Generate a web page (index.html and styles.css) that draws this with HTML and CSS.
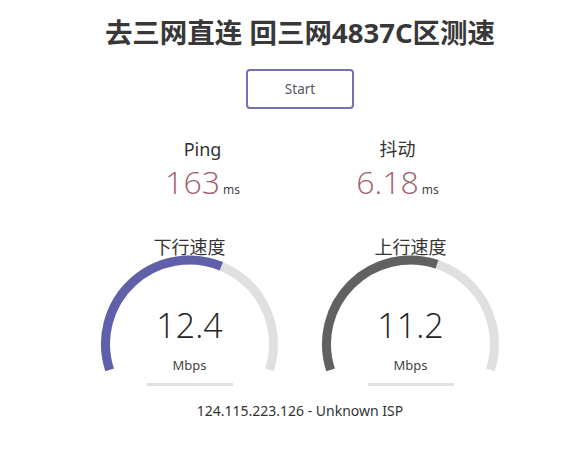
FILE: index.html
```html
<!DOCTYPE html>
<html lang="zh-CN">
<head>
<meta charset="utf-8">
<title>去三网直连 回三网4837C区测速</title>
<link rel="stylesheet" href="styles.css">
</head>
<body>
<main class="page">
  <h1 class="title">去三网直连 回三网4837C区测速</h1>
  <div class="btn-row"><button class="start-btn" type="button">Start</button></div>

  <section class="small-row">
    <div class="small-area">
      <div class="area-label">Ping</div>
      <div class="small-value"><span class="num">163</span><span class="unit">ms</span></div>
    </div>
    <div class="small-area">
      <div class="area-label">抖动</div>
      <div class="small-value"><span class="num">6.18</span><span class="unit">ms</span></div>
    </div>
  </section>

  <section class="gauge-row">
    <div class="gauge-area">
      <div class="area-label gauge-label">下行速度</div>
      <div class="gauge">
        <svg class="gauge-svg" width="221" height="120" viewBox="0 0 221 120">
          <path class="arc-bg" d="M30.61 114.96 A84 84 0 1 1 190.39 114.96"/>
          <path class="arc-dl" d="M30.61 114.96 A84 84 0 0 1 142.3 11.25"/>
        </svg>
        <div class="gauge-text">
          <div class="gauge-value">12.4</div>
          <div class="gauge-unit">Mbps</div>
        </div>
      </div>
      <div class="progress"></div>
    </div>
    <div class="gauge-area">
      <div class="area-label gauge-label">上行速度</div>
      <div class="gauge">
        <svg class="gauge-svg" width="221" height="120" viewBox="0 0 221 120">
          <path class="arc-bg" d="M30.61 114.96 A84 84 0 1 1 190.39 114.96"/>
          <path class="arc-ul" d="M30.61 114.96 A84 84 0 0 1 136.96 9.3"/>
        </svg>
        <div class="gauge-text">
          <div class="gauge-value">11.2</div>
          <div class="gauge-unit">Mbps</div>
        </div>
      </div>
      <div class="progress"></div>
    </div>
  </section>

  <div class="ip">124.115.223.126 - Unknown ISP</div>
</main>
</body>
</html>
```

FILE: styles.css
```css
html, body {
  margin: 0;
  padding: 0;
  background: #ffffff;
}

body {
  font-family: "Noto Sans", "Noto Sans CJK SC", sans-serif;
  color: #333333;
}

.page {
  box-sizing: border-box;
  width: 588px;
  padding-left: 12px;
  display: flex;
  flex-direction: column;
  align-items: center;
}

.title {
  margin: 15px 0 0 0;
  height: 36px;
  line-height: 36px;
  font-size: 27.5px;
  font-weight: 700;
  color: #383838;
  text-align: center;
  white-space: nowrap;
}

.btn-row {
  margin-top: 18px;
  display: flex;
  justify-content: center;
}

.start-btn {
  box-sizing: border-box;
  width: 108px;
  height: 40px;
  border: 2px solid #7470b8;
  border-radius: 4px;
  background: transparent;
  font-family: "Noto Sans", sans-serif;
  font-size: 13.5px;
  color: #555560;
  padding: 0;
}

.small-row {
  margin-top: 28px;
  display: flex;
  justify-content: center;
}

.small-area {
  width: 195px;
  display: flex;
  flex-direction: column;
  align-items: center;
}

.area-label {
  font-size: 18px;
  line-height: 24px;
  color: #333333;
}

.small-value {
  margin-top: 1px;
  height: 40px;
  line-height: 40px;
  white-space: nowrap;
}

.small-value .num {
  font-family: "Open Sans", "Noto Sans", sans-serif;
  font-weight: 300;
  font-size: 32px;
  color: #a0606a;
}

.small-value .unit {
  font-size: 12px;
  color: #444444;
  margin-left: 3px;
}

.gauge-row {
  margin-top: 33px;
  display: flex;
  justify-content: center;
}

.gauge-area {
  width: 221px;
  display: flex;
  flex-direction: column;
  align-items: center;
}

.gauge-label {
  line-height: 22px;
  margin-top: 1px;
  margin-bottom: -3px;
}

.gauge {
  display: grid;
  width: 221px;
}

.gauge-svg {
  grid-area: 1 / 1;
  display: block;
}

.arc-bg, .arc-dl, .arc-ul {
  fill: none;
  stroke-width: 9;
  stroke-linecap: butt;
}

.arc-bg { stroke: #e0e0e0; }
.arc-dl { stroke: #6060aa; }
.arc-ul { stroke: #616161; }

.gauge-text {
  grid-area: 1 / 1;
  padding-top: 50px;
  display: flex;
  flex-direction: column;
  align-items: center;
}

.gauge-value {
  font-family: "Open Sans", "Noto Sans", sans-serif;
  font-weight: 300;
  font-size: 34px;
  line-height: 40px;
  color: #222222;
}

.gauge-unit {
  margin-top: 11px;
  font-size: 13px;
  line-height: 18px;
  color: #444444;
}

.progress {
  margin-top: 8px;
  width: 86px;
  height: 3px;
  background: #e0e0e0;
}

.ip {
  margin-top: 15px;
  font-size: 14px;
  line-height: 20px;
  color: #333333;
  text-align: center;
}
```
